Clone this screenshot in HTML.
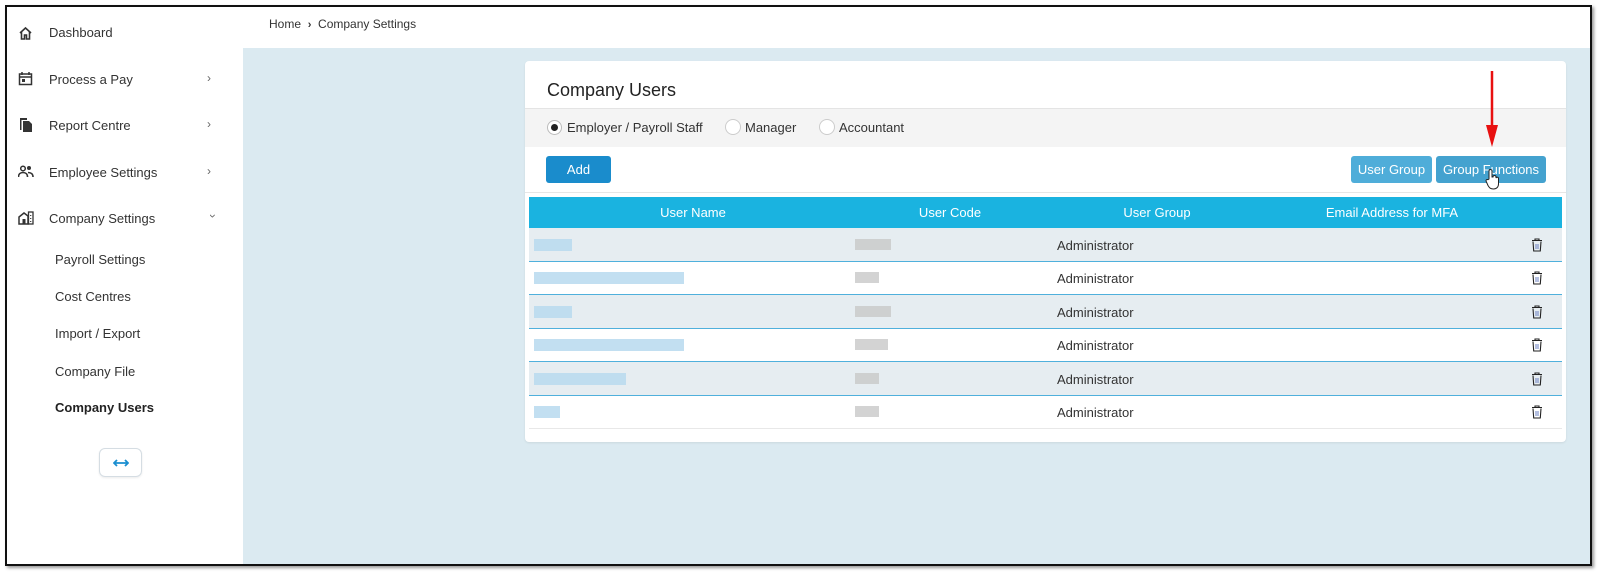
<!DOCTYPE html>
<html><head><style>
*{margin:0;padding:0;box-sizing:border-box}
body{width:1600px;height:575px;background:#fff;font-family:"Liberation Sans",sans-serif;font-size:13px;color:#333;position:relative;overflow:hidden}
.a{position:absolute}
.frame{left:5px;top:5px;width:1587px;height:561px;border:2px solid #111;box-shadow:2px 2px 3px rgba(0,0,0,.4);overflow:hidden;background:#dbeaf1}
.side{left:0;top:0;width:236px;height:100%;background:#fff}
.hdr{left:236px;top:0;right:0;height:41px;background:#fff}
.nav{left:42px;font-size:13px;color:#333}
.chev{left:200px;color:#666;font-size:12px}
.sub{left:48px;font-size:13px;color:#333}
.card{left:518px;top:54px;width:1041px;height:381px;background:#fff;border-radius:4px;box-shadow:0 1px 2px rgba(0,0,0,.08)}
.btn{color:#fff;border-radius:3px;text-align:center;line-height:27px;font-size:13px}
.th{color:#fff;font-size:13px;top:8px;transform:translateX(-50%)}
.row{left:4px;width:1033px;height:33.5px;border-bottom:1px solid #4fb0dc}
.blur{height:12px;background:#b7d9ee;opacity:.85}
.cblur{height:11px;background:#c8c8c8;opacity:.8}
.adm{left:532px;font-size:13px;color:#333}
.tr{left:1006px}
</style></head><body>
<div class="a frame">
 <div class="a side">
  <svg class="a" style="left:11px;top:19px" width="15" height="15" viewBox="0 0 15 15"><path d="M2 7L7.5 2 13 7M3.5 6v7h3v-4h2v4h3V6" fill="none" stroke="#333" stroke-width="1.6"/></svg>
  <div class="a nav" style="top:18px">Dashboard</div>
  <svg class="a" style="left:11px;top:64px" width="15" height="15" viewBox="0 0 15 15"><rect x="1.5" y="3" width="12" height="10.5" fill="none" stroke="#333" stroke-width="1.5"/><path d="M4 1v3M11 1v3M1.5 6h12" stroke="#333" stroke-width="1.5"/><rect x="4" y="8" width="3" height="3" fill="#333"/></svg>
  <div class="a nav" style="top:65px">Process a Pay</div><div class="a chev" style="top:64px">&#x203A;</div>
  <svg class="a" style="left:11px;top:110px" width="15" height="16" viewBox="0 0 15 16"><path d="M2 1h7v2H3.5v10H2z" fill="#333"/><path d="M5 4h6l3 3v8H5z" fill="#333"/></svg>
  <div class="a nav" style="top:111px">Report Centre</div><div class="a chev" style="top:110px">&#x203A;</div>
  <svg class="a" style="left:11px;top:158px" width="16" height="13" viewBox="0 0 16 13"><circle cx="5" cy="3.5" r="2.3" fill="none" stroke="#333" stroke-width="1.5"/><circle cx="11" cy="3" r="2" fill="#333"/><path d="M0.5 12c0-3 2-4.5 4.5-4.5S9.5 9 9.5 12M10 7.5c3 0 5 1.5 5 4.5" fill="none" stroke="#333" stroke-width="1.6"/></svg>
  <div class="a nav" style="top:158px">Employee Settings</div><div class="a chev" style="top:157px">&#x203A;</div>
  <svg class="a" style="left:11px;top:204px" width="16" height="14" viewBox="0 0 16 14"><path d="M1 13V6l5-4 4 3v8z" fill="none" stroke="#333" stroke-width="1.5"/><rect x="4.5" y="8" width="3" height="5" fill="#333"/><rect x="10.5" y="1" width="4.5" height="12" fill="none" stroke="#333" stroke-width="1.3"/><path d="M12.7 4v1M12.7 7v1M12.7 10v1" stroke="#333" stroke-width="1.2"/></svg>
  <div class="a nav" style="top:204px">Company Settings</div><div class="a chev" style="top:202px;transform:rotate(90deg);left:204px">&#x203A;</div>
  <div class="a sub" style="top:245px">Payroll Settings</div>
  <div class="a sub" style="top:282px">Cost Centres</div>
  <div class="a sub" style="top:319px">Import / Export</div>
  <div class="a sub" style="top:357px">Company File</div>
  <div class="a sub" style="top:393px;font-weight:bold;color:#222">Company Users</div>
  <div class="a" style="left:92px;top:441px;width:43px;height:29px;border:1px solid #d5dde3;border-radius:6px;box-shadow:0 1px 2px rgba(0,0,0,.08)">
   <svg class="a" style="left:13px;top:10px" width="16" height="8" viewBox="0 0 16 8"><path d="M1 4h14M4 1L1 4l3 3M12 1l3 3-3 3" fill="none" stroke="#1a8ed0" stroke-width="1.8"/></svg>
  </div>
 </div>
 <div class="a hdr">
  <div class="a" style="left:26px;top:10px;font-size:12px;color:#333">Home &nbsp;<b style="font-size:11px">&#x203A;</b>&nbsp; Company Settings</div>
 </div>
 <div class="a card">
  <div class="a" style="left:22px;top:19px;font-size:18px;color:#222">Company Users</div>
  <div class="a" style="left:0;top:47px;width:100%;height:39px;background:#f4f4f4;border-top:1px solid #e4e4e4">
   <div class="a" style="left:22px;top:11px;width:15px;height:15px;border:1px solid #bbb;border-radius:50%;background:#fff"><div class="a" style="left:3px;top:3px;width:7px;height:7px;border-radius:50%;background:#222"></div></div>
   <div class="a" style="left:42px;top:11px">Employer / Payroll Staff</div>
   <div class="a" style="left:200px;top:10px;width:16px;height:16px;border:1px solid #ccc;border-radius:50%;background:#fff"></div>
   <div class="a" style="left:220px;top:11px">Manager</div>
   <div class="a" style="left:294px;top:10px;width:16px;height:16px;border:1px solid #ccc;border-radius:50%;background:#fff"></div>
   <div class="a" style="left:314px;top:11px">Accountant</div>
  </div>
  <div class="a btn" style="left:21px;top:95px;width:65px;height:27px;background:#1a8ccc">Add</div>
  <div class="a btn" style="left:826px;top:95px;width:81px;height:27px;background:#4fadd9">User Group</div>
  <div class="a btn" style="left:911px;top:95px;width:110px;height:27px;background:#44a2cf">Group Functions</div>
  <div class="a" style="left:0;top:131px;width:100%;border-top:1px solid #e6e6e6"></div>
  <div class="a" style="left:4px;top:136px;width:1033px;height:31px;background:#1ab3e0">
   <div class="a th" style="left:164px">User Name</div>
   <div class="a th" style="left:421px">User Code</div>
   <div class="a th" style="left:628px">User Group</div>
   <div class="a th" style="left:863px">Email Address for MFA</div>
  </div>
  <div class="a row" style="top:167px;background:#e6edf1"></div>
  <div class="a row" style="top:200.5px;background:#fff"></div>
  <div class="a row" style="top:234px;background:#e6edf1"></div>
  <div class="a row" style="top:267.5px;background:#fff"></div>
  <div class="a row" style="top:301px;background:#e6edf1"></div>
  <div class="a row" style="top:334.5px;background:#fff;border-bottom:1px solid #e8e8e8"></div>
  <div class="a blur" style="left:9px;top:178px;width:38px"></div>
  <div class="a blur" style="left:9px;top:211px;width:150px"></div>
  <div class="a blur" style="left:9px;top:245px;width:38px"></div>
  <div class="a blur" style="left:9px;top:278px;width:150px"></div>
  <div class="a blur" style="left:9px;top:312px;width:92px"></div>
  <div class="a blur" style="left:9px;top:345px;width:26px"></div>
  <div class="a cblur" style="left:330px;top:178px;width:36px"></div>
  <div class="a cblur" style="left:330px;top:211px;width:24px"></div>
  <div class="a cblur" style="left:330px;top:245px;width:36px"></div>
  <div class="a cblur" style="left:330px;top:278px;width:33px"></div>
  <div class="a cblur" style="left:330px;top:312px;width:24px"></div>
  <div class="a cblur" style="left:330px;top:345px;width:24px"></div>
  <div class="a adm" style="top:177px">Administrator</div>
  <div class="a adm" style="top:210px">Administrator</div>
  <div class="a adm" style="top:244px">Administrator</div>
  <div class="a adm" style="top:277px">Administrator</div>
  <div class="a adm" style="top:311px">Administrator</div>
  <div class="a adm" style="top:344px">Administrator</div>
  <svg class="a tr" style="top:177px" width="12" height="14" viewBox="0 0 12 14"><path d="M1 2.5h10M4 2.5V1h4v1.5M2 3.5l.7 9.5h6.6l.7-9.5" fill="none" stroke="#222" stroke-width="1.1"/><path d="M5 6v5M7 6v5" stroke="#6a7fc0" stroke-width="1"/></svg>
  <svg class="a tr" style="top:210px" width="12" height="14" viewBox="0 0 12 14"><path d="M1 2.5h10M4 2.5V1h4v1.5M2 3.5l.7 9.5h6.6l.7-9.5" fill="none" stroke="#222" stroke-width="1.1"/><path d="M5 6v5M7 6v5" stroke="#6a7fc0" stroke-width="1"/></svg>
  <svg class="a tr" style="top:244px" width="12" height="14" viewBox="0 0 12 14"><path d="M1 2.5h10M4 2.5V1h4v1.5M2 3.5l.7 9.5h6.6l.7-9.5" fill="none" stroke="#222" stroke-width="1.1"/><path d="M5 6v5M7 6v5" stroke="#6a7fc0" stroke-width="1"/></svg>
  <svg class="a tr" style="top:277px" width="12" height="14" viewBox="0 0 12 14"><path d="M1 2.5h10M4 2.5V1h4v1.5M2 3.5l.7 9.5h6.6l.7-9.5" fill="none" stroke="#222" stroke-width="1.1"/><path d="M5 6v5M7 6v5" stroke="#6a7fc0" stroke-width="1"/></svg>
  <svg class="a tr" style="top:311px" width="12" height="14" viewBox="0 0 12 14"><path d="M1 2.5h10M4 2.5V1h4v1.5M2 3.5l.7 9.5h6.6l.7-9.5" fill="none" stroke="#222" stroke-width="1.1"/><path d="M5 6v5M7 6v5" stroke="#6a7fc0" stroke-width="1"/></svg>
  <svg class="a tr" style="top:344px" width="12" height="14" viewBox="0 0 12 14"><path d="M1 2.5h10M4 2.5V1h4v1.5M2 3.5l.7 9.5h6.6l.7-9.5" fill="none" stroke="#222" stroke-width="1.1"/><path d="M5 6v5M7 6v5" stroke="#6a7fc0" stroke-width="1"/></svg>
  <svg class="a" style="left:960px;top:107px" width="14" height="22" viewBox="0 0 14 22"><path d="M4 11V3a1.5 1.5 0 013 0v6h1a1.5 1.5 0 013 0v1a1.3 1.3 0 012.5 .5V16c0 3-2 5-5 5s-4-1-5.5-3.5L1 13a1.3 1.3 0 012-1.3z" fill="#fff" stroke="#222" stroke-width="1"/></svg>
 </div>
 <svg class="a" style="left:1478px;top:62px" width="14" height="80" viewBox="0 0 14 80"><path d="M7 2v58" stroke="#e81010" stroke-width="2.5"/><path d="M1 56l6 22 6-22z" fill="#e81010"/></svg>
</div>
</body></html>
